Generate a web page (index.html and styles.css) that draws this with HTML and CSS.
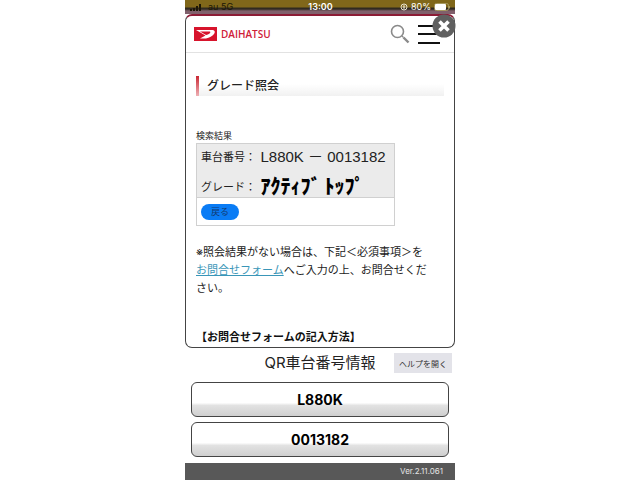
FILE: index.html
```html
<!DOCTYPE html>
<html lang="ja">
<head>
    <meta charset="UTF-8">
    <meta name="viewport" content="width=device-width, initial-scale=1.0">
    <title>グレード照会</title>
    <link rel="stylesheet" href="styles.css">
</head>
<body>
    <div class="phone">
        <div class="status-bar">
            <div class="status-side">
                <svg viewBox="0 0 12 8" width="12" height="8">
                    <path d="M0 6h2v2H0zM3 5h2v3H3zM6 3h2v5H6zM9 1h2v7H9z" fill="#1c1605"/>
                </svg>
                <span class="carrier">au 5G</span>
            </div>
            <div class="clock">13:00</div>
            <div class="status-side status-right">
                <svg viewBox="0 0 8 8" width="8" height="8" fill="none" stroke="#e9e3d0">
                    <circle cx="4" cy="4" r="3"/>
                    <path d="M4 2v4M2.5 4h3"/>
                </svg>
                <span>80%</span>
                <svg viewBox="0 0 17 8" width="17" height="8">
                    <rect x="0.5" y="0.5" width="14" height="7" rx="2" fill="none" stroke="#a89a60"/>
                    <rect x="1" y="1" width="11" height="6" rx="1" fill="#fff"/>
                    <path d="M15.5 3v2.5" stroke="#a89a60"/>
                </svg>
            </div>
        </div>

        <div class="web-panel">
            <button class="close-btn" type="button" aria-label="閉じる">
                <svg viewBox="0 0 24 24" width="24" height="24">
                    <circle cx="12" cy="12" r="11.5" fill="#606060"/>
                    <path d="M7.5 7.5l9 9M16.5 7.5l-9 9" stroke="#fff" stroke-width="3.6"/>
                </svg>
            </button>

            <header class="site-header">
                <a class="logo" href="#">
                    <svg viewBox="0 0 23 14" width="23" height="14">
                        <rect width="23" height="14" fill="#d7142c"/>
                        <path d="M2 3h15.500C21 3 21.500 5 20 7c-1.600 2-4.500 3.600-8 4.500H6l5.500-3z" fill="#fff"/>
                        <path d="M6 4.500h9c1.500 0 1.800.6 1 1.400-.9.9-2.400 1.600-4 2.200z" fill="#d7142c"/>
                    </svg>
                    <span>DAIHATSU</span>
                </a>
                <div class="header-icons">
                    <svg viewBox="0 0 20 20" width="20" height="20" fill="none" stroke="#8a8a8a">
                        <circle cx="7.5" cy="7.5" r="6" stroke-width="1.6"/>
                        <path d="M12 12l1.5 1.5" stroke-width="1.2"/>
                        <path d="M13.5 13.5l5 5" stroke-width="2.4"/>
                    </svg>
                    <svg viewBox="0 0 22 20" width="22" height="20" stroke="#111" stroke-width="2">
                        <path d="M0 2h22M0 10h22M0 19h22"/>
                    </svg>
                </div>
            </header>

            <main class="content">
                <h1 class="page-title">グレード照会</h1>

                <table class="result">
                    <caption>検索結果</caption>
                    <tbody>
                        <tr class="serial">
                            <th scope="row">車台番号：</th>
                            <td>L880K － 0013182</td>
                        </tr>
                        <tr class="grade">
                            <th scope="row">グレード：</th>
                            <td>ｱｸﾃｨﾌﾞ ﾄｯﾌﾟ</td>
                        </tr>
                        <tr class="actions">
                            <td colspan="2"><button class="back-btn" type="button">戻る</button></td>
                        </tr>
                    </tbody>
                </table>

                <p class="note">※照会結果がない場合は、下記＜必須事項＞を<br><a href="#">お問合せフォーム</a>へご入力の上、お問合せください。</p>

                <h2 class="form-title">【お問合せフォームの記入方法】</h2>
            </main>
        </div>

        <div class="qr-header">
            <h2>QR車台番号情報</h2>
            <button class="help-btn" type="button">ヘルプを開く</button>
        </div>

        <div class="qr-list">
            <button class="qr-btn" type="button">L880K</button>
            <button class="qr-btn" type="button">0013182</button>
        </div>

        <footer class="version">Ver.2.11.061</footer>
    </div>
</body>
</html>
```
FILE: styles.css
```css
* {
    margin: 0;
    padding: 0;
    box-sizing: border-box;
}

body {
    font-family: Inter, "Noto Sans CJK JP", sans-serif;
    background: #fff;
    color: #222;
}

button {
    font-family: inherit;
    border: none;
}

.phone {
    display: flex;
    flex-direction: column;
    max-width: 270px;
    min-height: 100vh;
    margin: 0 auto;
}

.status-bar {
    display: flex;
    align-items: center;
    height: 14px;
    padding: 0 4px 0 5px;
    background: linear-gradient(#80671a 0 7px, #302a20 8px 9px, #80606c 11px, #80606c);
    color: #fff;
    font-size: 9px;
    line-height: 14px;
}

.status-side {
    display: flex;
    flex: 1;
    align-items: center;
    gap: 6px;
}

.carrier {
    color: #1c1605;
}

.clock {
    font-size: 9px;
    font-weight: 600;
}

.status-right {
    justify-content: flex-end;
    gap: 3px;
}

.web-panel {
    position: relative;
    padding-bottom: 1px;
    border: 1px solid #444;
    border-top: 2px solid #8c1b35;
    border-radius: 7px;
    background: #fff;
}

.close-btn {
    position: absolute;
    top: -2px;
    right: -2px;
    width: 24px;
    height: 24px;
    background: none;
}

.close-btn svg {
    display: block;
}

.site-header {
    display: flex;
    align-items: center;
    justify-content: space-between;
    height: 37px;
    padding: 0 14px 0 8px;
    border-bottom: 1px solid #e2e2e2;
}

.logo {
    display: flex;
    align-items: center;
    gap: 4px;
    color: #cf2038;
    font-family: "Open Sans", sans-serif;
    font-size: 10px;
    font-weight: 600;
    text-decoration: none;
}

.header-icons {
    display: flex;
    gap: 8px;
}

.content {
    padding: 23px 10px 0;
}

.page-title {
    height: 20px;
    margin-bottom: 33px;
    padding-left: 8px;
    border-left: 3px solid;
    border-image: linear-gradient(#c8202c, #f0b8bc) 1;
    background: linear-gradient(#fff 40%, #f1f1f1);
    font-size: 12px;
    font-weight: 500;
    line-height: 20px;
}

.result {
    width: 199px;
    border: 1px solid #d0d0d0;
    border-collapse: collapse;
}

.result caption {
    font-size: 9px;
    line-height: 14px;
    text-align: left;
}

.result th {
    width: 64px;
    padding-left: 4px;
    font-size: 11px;
    font-weight: 400;
    text-align: left;
    white-space: nowrap;
}

.result td {
    white-space: nowrap;
}

.serial,
.grade {
    background: #ebebeb;
}

.serial {
    height: 26px;
    line-height: 20px;
}

.serial td {
    font-family: "Liberation Sans", "Noto Sans CJK JP", sans-serif;
    font-size: 15px;
}

.grade {
    height: 28px;
    line-height: 20px;
    vertical-align: bottom;
}

.grade td {
    color: #000;
    font-size: 20px;
    font-weight: 900;
}

.actions {
    height: 28px;
    border-top: 1px solid #d0d0d0;
}

.actions td {
    padding-left: 4px;
}

.back-btn {
    display: block;
    width: 38px;
    height: 16px;
    border-radius: 8px;
    background: #0a7cf5;
    color: #123a70;
    font-size: 9px;
    line-height: 16px;
}

.note {
    margin: 17px 0 32px;
    padding-right: 8px;
    font-size: 11px;
    line-height: 18px;
}

.note a {
    color: #3a96b8;
}

.form-title {
    color: #111;
    font-size: 11px;
    font-weight: 700;
    line-height: 17px;
}

.qr-header {
    display: grid;
    grid-template-columns: 1fr auto 1fr;
    align-items: center;
    padding: 4px 3px 0;
}

.qr-header h2 {
    grid-column: 2;
    font-size: 15px;
    font-weight: 400;
    line-height: 22px;
}

.help-btn {
    justify-self: end;
    width: 58px;
    height: 20px;
    background: #e3e3e9;
    color: #333;
    font-size: 8px;
}

.qr-list {
    display: flex;
    flex-direction: column;
    gap: 5px;
    padding: 8px 6px 6px;
}

.qr-btn {
    height: 35px;
    border: 1px solid #444;
    border-radius: 6px;
    background: linear-gradient(#fff 60%, #e2e2e2 68%, #cfcfcf);
    color: #000;
    font-size: 14px;
    font-weight: 700;
}

.version {
    flex: 1;
    padding-right: 12px;
    background: #585858;
    color: #e4e4e4;
    font-size: 8px;
    line-height: 17px;
    text-align: right;
}
```
